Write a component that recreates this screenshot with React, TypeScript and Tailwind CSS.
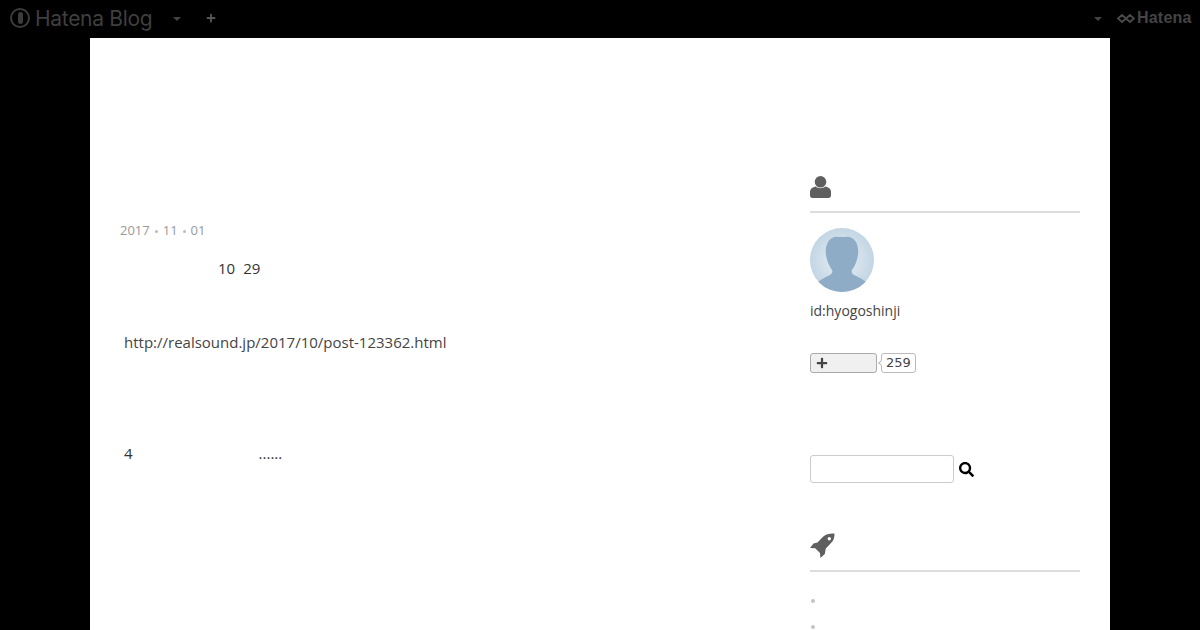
import { FaPlus, FaSearch } from "react-icons/fa";

function UserIcon() {
  return (
    <svg width="21" height="22" viewBox="0 0 21 22" className="mb-px text-[#5f5f5f]" fill="currentColor">
      <circle cx="10.500" cy="5.800" r="5.800" />
      <path d="M5.500 10.500c2.800 2.200 7.200 2.200 10 0 3 .7 5.400 2.400 5.500 5v4c0 1.500-1 2.500-2.500 2.500h-16C1 22 0 21 0 19.500v-4c.1-2.600 2.500-4.300 5.500-5z" />
    </svg>
  );
}

function RocketIcon() {
  return (
    <svg width="25" height="25" viewBox="0 0 25 25" className="text-[#5f5f5f]" fill="currentColor">
      <path d="M24.500.5c-4.500-.3-8.500.6-11.500 3.200L7.500 9.500 3.500 10.500 0 15l5.200.2 4.800 4.800.4 5 4.400-4 1-5.500 5.200-5.500C23.500 8 24.700 4.300 24.500.5z" />
      <circle cx="19.300" cy="5.700" r="1.700" fill="#ffffff" />
    </svg>
  );
}

function HatenaMark() {
  return (
    <svg width="18" height="11" viewBox="0 0 18 11" className="ml-[15px] text-[#4a4a4a]" fill="none" stroke="currentColor" strokeWidth="1.800">
      <path d="M1 5.500 5 2l4 3.500L13 2l4 3.500L13 9 9 5.500 5 9zM5 2l8 7M5 9l8-7" />
    </svg>
  );
}

function Avatar() {
  return (
    <svg width="64" height="64" viewBox="0 0 64 64">
      <defs>
        <radialGradient id="avatarBg" cx="50%" cy="50%" r="50%">
          <stop offset="0%" stopColor="#e8eff4" />
          <stop offset="100%" stopColor="#c3d6e4" />
        </radialGradient>
        <clipPath id="avatarClip">
          <circle cx="32" cy="32" r="32" />
        </clipPath>
      </defs>
      <g clipPath="url(#avatarClip)">
        <rect width="64" height="64" fill="url(#avatarBg)" />
        <path
          d="M22 10C25 8 28 9 32 9C36 9 39 8 42 10C47 13 49 20 48 27C47 33 45 38 42 42C41 44 42 46 44 47C48 49 53 51 56 54V64H8V54C11 51 16 49 20 47C22 46 23 44 22 42C19 38 17 33 16 27C15 20 17 13 22 10Z"
          fill="#8eacc6"
        />
      </g>
    </svg>
  );
}

function ModuleHeading({ icon }: { icon: React.ReactNode }) {
  return (
    <div className="h-[47px] flex items-end pb-[12px] border-b-2 border-[#dddddd]">{icon}</div>
  );
}

export default function App() {
  return (
    <div className="h-[630px] overflow-hidden bg-black font-['Open_Sans',sans-serif] text-[#333333]">
      {/* Top bar */}
      <div className="h-[38px] pb-[2px] flex items-center justify-between">
        <div className="flex items-center">
          <div className="ml-[10px] w-[20px] h-[20px] rounded-full border-2 border-[#3c3c3c] flex items-center justify-center">
            <div className="w-[5px] h-[12px] rounded-sm bg-[#3c3c3c]" />
          </div>
          <span className="ml-[5px] w-[117px] text-[21px] leading-none font-['Inter',sans-serif] font-normal tracking-[-0.3px] text-[#3f3f3f] whitespace-nowrap">
            Hatena Blog
          </span>
          <div className="ml-[21px] mt-[1px] w-0 h-0 border-x-[4px] border-x-transparent border-t-[4px] border-t-[#444444]" />
          <FaPlus className="ml-[25px] text-[#555555]" size={10} />
        </div>
        <div className="flex items-center">
          <div className="mt-[1px] w-0 h-0 border-x-[4px] border-x-transparent border-t-[4px] border-t-[#444444]" />
          <HatenaMark />
          <span className="ml-[2px] mr-[7px] w-[56px] text-[16px] leading-none font-['Liberation_Sans',sans-serif] font-bold tracking-[0.2px] text-[#444444]">
            Hatena
          </span>
        </div>
      </div>

      {/* Page */}
      <div className="mx-auto w-[1020px] h-[592px] bg-white flex">
        <main className="w-[720px] pl-[30px] pt-[184px]">
          <div className="flex items-center h-[18px] text-[13px] text-[#999999]">
            <span>2017</span>
            <span className="mx-[5px] w-[3px] h-[3px] rounded-full bg-[#bbbbbb]" />
            <span>11</span>
            <span className="mx-[5px] w-[3px] h-[3px] rounded-full bg-[#bbbbbb]" />
            <span>01</span>
          </div>
          <p className="mt-[16px] pl-[98px] text-[15px] leading-[24px] flex">
            <span>10</span>
            <span className="ml-[8px]">29</span>
          </p>
          <p className="mt-[50px] pl-[4px] text-[15px] leading-[24px] text-[#444444]">
            http://realsound.jp/2017/10/post-123362.html
          </p>
          <p className="mt-[87px] pl-[4px] text-[15px] leading-[24px] flex">
            <span>4</span>
            <span className="ml-[126px]">......</span>
          </p>
        </main>

        <aside className="w-[270px] pt-[128px]">
          <ModuleHeading icon={<UserIcon />} />
          <div className="mt-[15px] flex"><Avatar /></div>
          <p className="mt-[8px] text-[14px] leading-[22px] text-[#444444]">id:hyogoshinji</p>

          <div className="mt-[31px] flex items-center h-[20px]">
            <div className="w-[67px] h-[20px] rounded-[3px] border border-[#aaaaaa] bg-[#f0f0f0] flex items-center pl-[5px]">
              <FaPlus className="text-[#444444]" size={12} />
            </div>
            <div className="relative ml-[4px] w-[35px] h-[20px] rounded-[3px] border border-[#bbbbbb] flex items-center justify-center text-[13px] font-['DejaVu_Sans',sans-serif] text-[#444444]">
              <span className="absolute left-[-3px] top-[7px] w-[4px] h-[4px] rotate-45 bg-white border-l border-b border-[#bbbbbb]" />
              259
            </div>
          </div>

          <div className="mt-[82px] flex items-center">
            <input className="w-[144px] h-[28px] rounded-[3px] border border-[#cccccc] bg-white" />
            <FaSearch className="ml-[5px] text-black" size={15} />
          </div>

          <div className="mt-[42px]">
            <ModuleHeading icon={<RocketIcon />} />
          </div>
          <div className="mt-[27px] ml-[1px] w-[4px] h-[4px] rounded-full bg-[#c4c4c4]" />
          <div className="mt-[22px] ml-[1px] w-[4px] h-[4px] rounded-full bg-[#c4c4c4]" />
        </aside>
      </div>
    </div>
  );
}
